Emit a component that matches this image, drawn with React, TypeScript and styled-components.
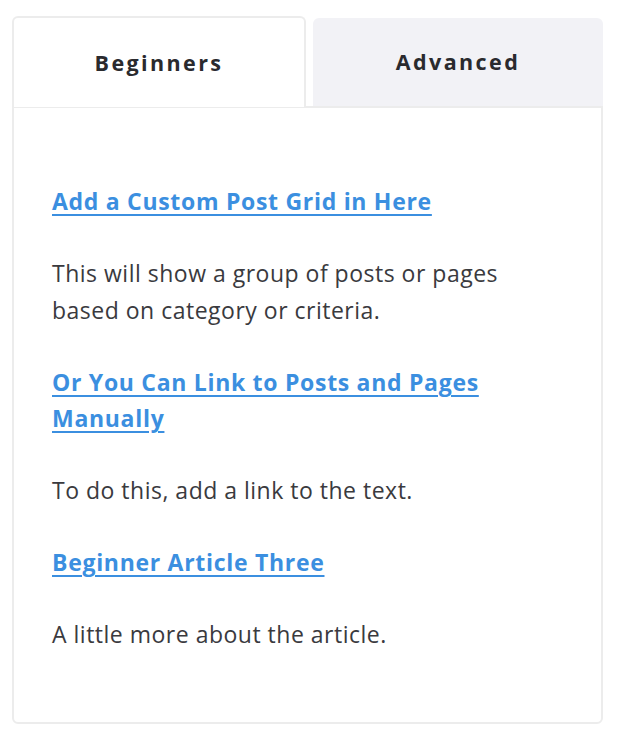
import styled, { createGlobalStyle } from "styled-components";

const GlobalStyle = createGlobalStyle`
    body {
        margin: 0;
        background: #ffffff;
        font-family: "Open Sans", sans-serif;
    }
`;

const Wrapper = styled.div`
    padding: 16px 15px 0 12px;
`;

const TabList = styled.div`
    display: flex;
    gap: 7px;
    align-items: flex-end;
`;

const Tab = styled.button<{ active?: boolean }>`
    flex: 1;
    height: ${(p) => (p.active ? "91px" : "88px")};
    margin-bottom: ${(p) => (p.active ? "-1px" : "0")};
    position: relative;
    z-index: ${(p) => (p.active ? 1 : 0)};
    background: ${(p) => (p.active ? "#ffffff" : "#f2f2f6")};
    border: ${(p) => (p.active ? "2px solid #ececec" : "none")};
    border-bottom: none;
    border-radius: 6px 6px 0 0;
    font-family: "Open Sans", sans-serif;
    font-weight: 700;
    font-size: 21.5px;
    letter-spacing: 2.4px;
    color: #2a2a2e;
    cursor: pointer;
    padding: 0 0 1px;
`;

const Panel = styled.div`
    border: 2px solid #ececec;
    border-radius: 0 0 6px 6px;
    padding: 40px 38px;
    height: 618px;
    box-sizing: border-box;
`;

const Link = styled.a`
    display: block;
    margin: 35px 0 36px;
    font-weight: 700;
    font-size: 23px;
    letter-spacing: 0.7px;
    line-height: 36px;
    color: #3b8fe0;
    text-decoration: underline;
    text-underline-offset: 4px;
    text-decoration-thickness: 2px;
`;

const Text = styled.p`
    margin: 36px 0 35px;
    font-size: 23px;
    letter-spacing: 0.5px;
    line-height: 37px;
    color: #3a3a3e;
`;

const articles = [
    {
        title: "Add a Custom Post Grid in Here",
        body: "This will show a group of posts or pages based on category or criteria.",
    },
    {
        title: "Or You Can Link to Posts and Pages Manually",
        body: "To do this, add a link to the text.",
    },
    {
        title: "Beginner Article Three",
        body: "A little more about the article.",
    },
];

export default function App() {
    return (
        <>
            <GlobalStyle />
            <Wrapper>
                <TabList>
                    <Tab active>Beginners</Tab>
                    <Tab>Advanced</Tab>
                </TabList>
                <Panel>
                    {articles.map(({ title, body }) => (
                        <div key={title}>
                            <Link href="#">{title}</Link>
                            <Text>{body}</Text>
                        </div>
                    ))}
                </Panel>
            </Wrapper>
        </>
    );
}
